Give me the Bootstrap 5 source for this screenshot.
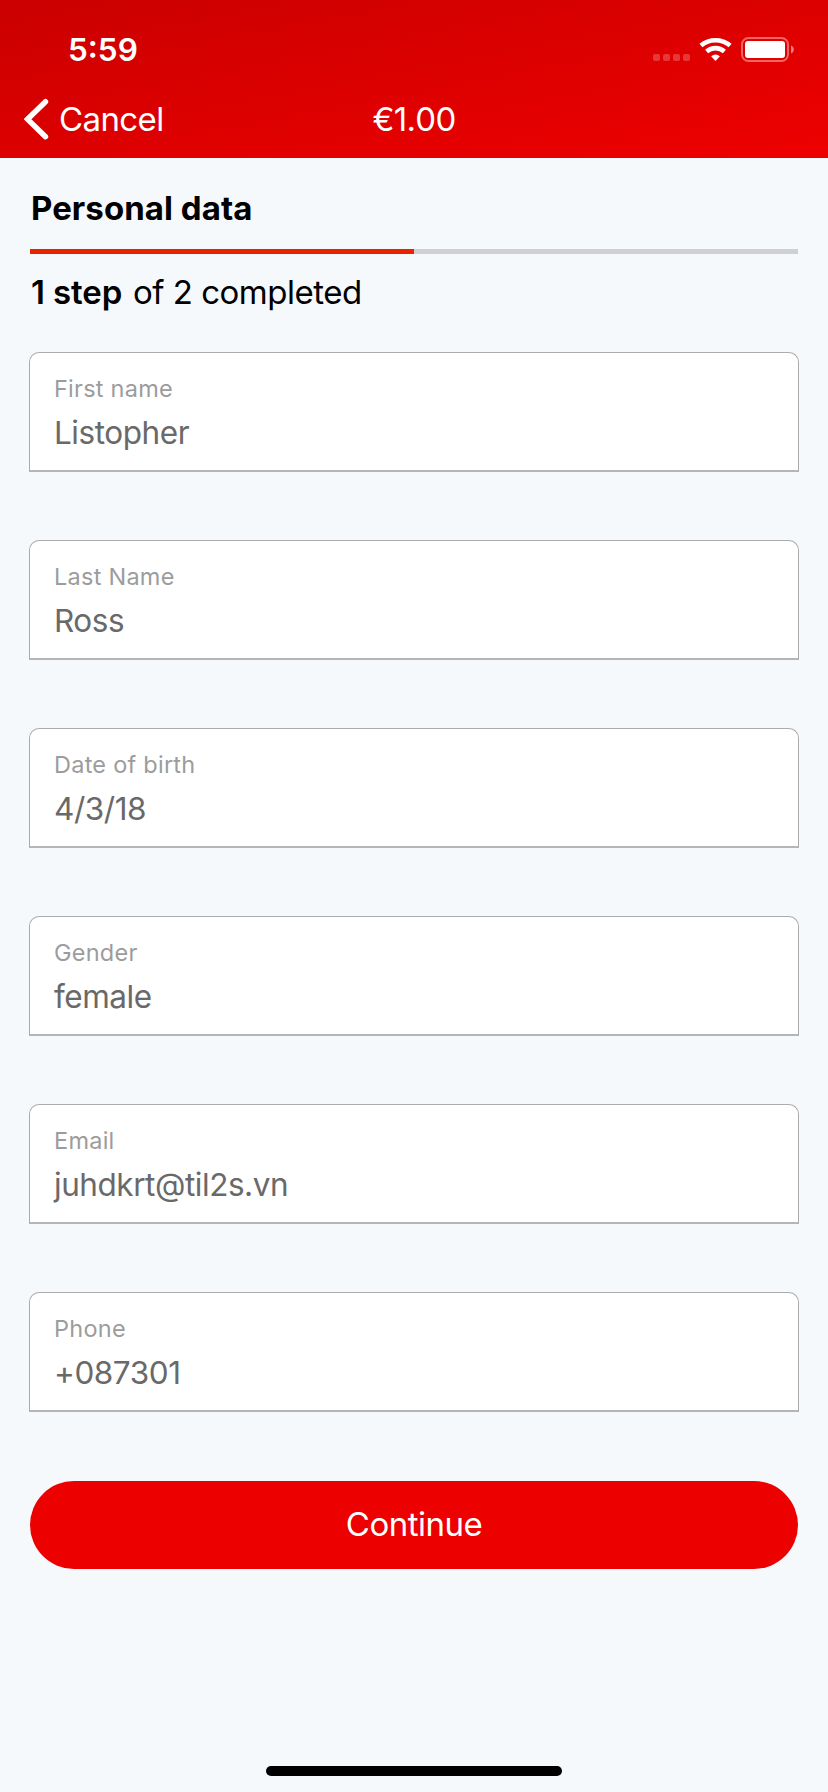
<!DOCTYPE html>
<html lang="en">
<head>
<meta charset="utf-8">
<meta name="viewport" content="width=device-width, initial-scale=1">
<title>Personal data</title>
<link rel="stylesheet" href="https://cdn.jsdelivr.net/npm/bootstrap@5.3.0/dist/css/bootstrap.min.css">
<style>
  body { font-family: Inter, "Liberation Sans", sans-serif; background: #f5f9fc; color: #000; }
  .screen { height: 1792px; }
  .top-area { height: 158px; background: linear-gradient(to bottom right, #cb0000, #ee0000); }
  .status-row { height: 80px; padding: 20px 34px 0 68px; }
  .status-icons { margin-top: 16px; }
  .clock { font-size: 31.5px; font-weight: 600; line-height: 60px; }
  .nav-row { height: 78px; padding: 0 24px; font-size: 33px; font-weight: 400; line-height: 78px; }
  .cancel-text { letter-spacing: -.6px; margin-left: 10px; }
  .amount { letter-spacing: -.7px; font-kerning: none; }
  .content { padding: 28px 30px 0; }
  .heading { font-size: 33px; font-weight: 700; line-height: 44px; letter-spacing: .05px; padding-left: 1px; }
  .steps-bar { height: 5px; margin-top: 19px; background: #cfcfd4; --bs-progress-bar-bg: #e92200; }
  .steps-text { font-size: 33px; line-height: 44px; margin-top: 16px; letter-spacing: -.5px; padding-left: 1px; }
  .steps-done { letter-spacing: -.1px; margin-right: 2px; }
  .fields { margin: 38px -1px 0; gap: 68px; }
  .field { height: 120px; padding: 20px 24px 0; background: #fff; border: 1px solid #ababab; border-bottom: 2px solid #b5b5b5; border-radius: 10px 10px 0 0; }
  .field-label { font-size: 23.5px; line-height: 32px; color: #9c9c9c; letter-spacing: .25px; }
  .field-value { font-size: 31.5px; line-height: 44px; margin-top: 6px; color: #696969; letter-spacing: -.45px; }
  .btn-continue { --bs-btn-bg: #ec0000; --bs-btn-color: #fff; --bs-btn-border-width: 0; height: 88px; margin-top: 69px; padding: 0 0 2px; font-size: 33px; font-weight: 400; line-height: 84px; letter-spacing: -.5px; }
  .home-bar { width: 296px; height: 10px; background: #000; margin-bottom: 16px; }
</style>
<script src="https://cdn.jsdelivr.net/npm/bootstrap@5.3.0/dist/js/bootstrap.bundle.min.js"></script>
</head>
<body>
<div class="screen d-flex flex-column overflow-hidden">
  <header class="top-area text-white flex-shrink-0">
    <div class="status-row d-flex justify-content-between">
      <span class="clock">5:59</span>
      <svg class="status-icons" width="142" height="26" viewBox="0 0 142 26" aria-hidden="true">
        <g fill="#fff" fill-opacity=".22">
          <rect x="1" y="18" width="7" height="7" rx="2"/><rect x="11" y="18" width="7" height="7" rx="2"/><rect x="21" y="18" width="7" height="7" rx="2"/><rect x="31" y="18" width="7" height="7" rx="2"/>
        </g>
        <g fill="none" stroke="#fff" stroke-width="4.6">
          <path d="M48.9 9.6A22.5 22.5 0 0 1 78.1 9.6"/>
          <path d="M54.6 15.5A13.5 13.5 0 0 1 72.4 15.5"/>
        </g>
        <path d="M59.1 20.2A7 7 0 0 1 67.9 20.2L63.5 25Z" fill="#fff"/>
        <rect x="90" y="2" width="46" height="23" rx="6.5" fill="none" stroke="#fff" stroke-opacity=".4" stroke-width="2"/>
        <rect x="93" y="5" width="40" height="17" rx="3" fill="#fff"/>
        <path d="M139 9.5C142.7 10.8 142.7 16.2 139 17.5Z" fill="#fff" fill-opacity=".5"/>
      </svg>
    </div>
    <div class="nav-row row g-0">
      <div class="col-4 d-flex align-items-center">
        <svg width="25" height="42" viewBox="0 0 25 42" aria-hidden="true"><path d="M21.5 3.7L3.5 21.2L21.5 38.7" fill="none" stroke="#fff" stroke-width="5.4" stroke-linecap="round" stroke-linejoin="miter"/></svg>
        <span class="cancel-text">Cancel</span>
      </div>
      <div class="col-4 text-center amount">€1.00</div>
    </div>
  </header>

  <main class="content">
    <h1 class="heading mb-0">Personal data</h1>
    <div class="progress steps-bar rounded-0"><div class="progress-bar" style="width:50%"></div></div>
    <div class="steps-text"><span class="steps-done fw-semibold">1 step</span> of 2 completed</div>

    <div class="fields d-flex flex-column">
      <div class="field"><div class="field-label">First name</div><div class="field-value">Listopher</div></div>
      <div class="field"><div class="field-label">Last Name</div><div class="field-value">Ross</div></div>
      <div class="field"><div class="field-label">Date of birth</div><div class="field-value">4/3/18</div></div>
      <div class="field"><div class="field-label">Gender</div><div class="field-value">female</div></div>
      <div class="field"><div class="field-label">Email</div><div class="field-value">juhdkrt@til2s.vn</div></div>
      <div class="field"><div class="field-label">Phone</div><div class="field-value">+087301</div></div>
    </div>
    <button type="button" class="btn btn-continue rounded-pill w-100">Continue</button>
  </main>
  <div class="home-bar rounded-pill mx-auto mt-auto flex-shrink-0"></div>
</div>
</body>
</html>
